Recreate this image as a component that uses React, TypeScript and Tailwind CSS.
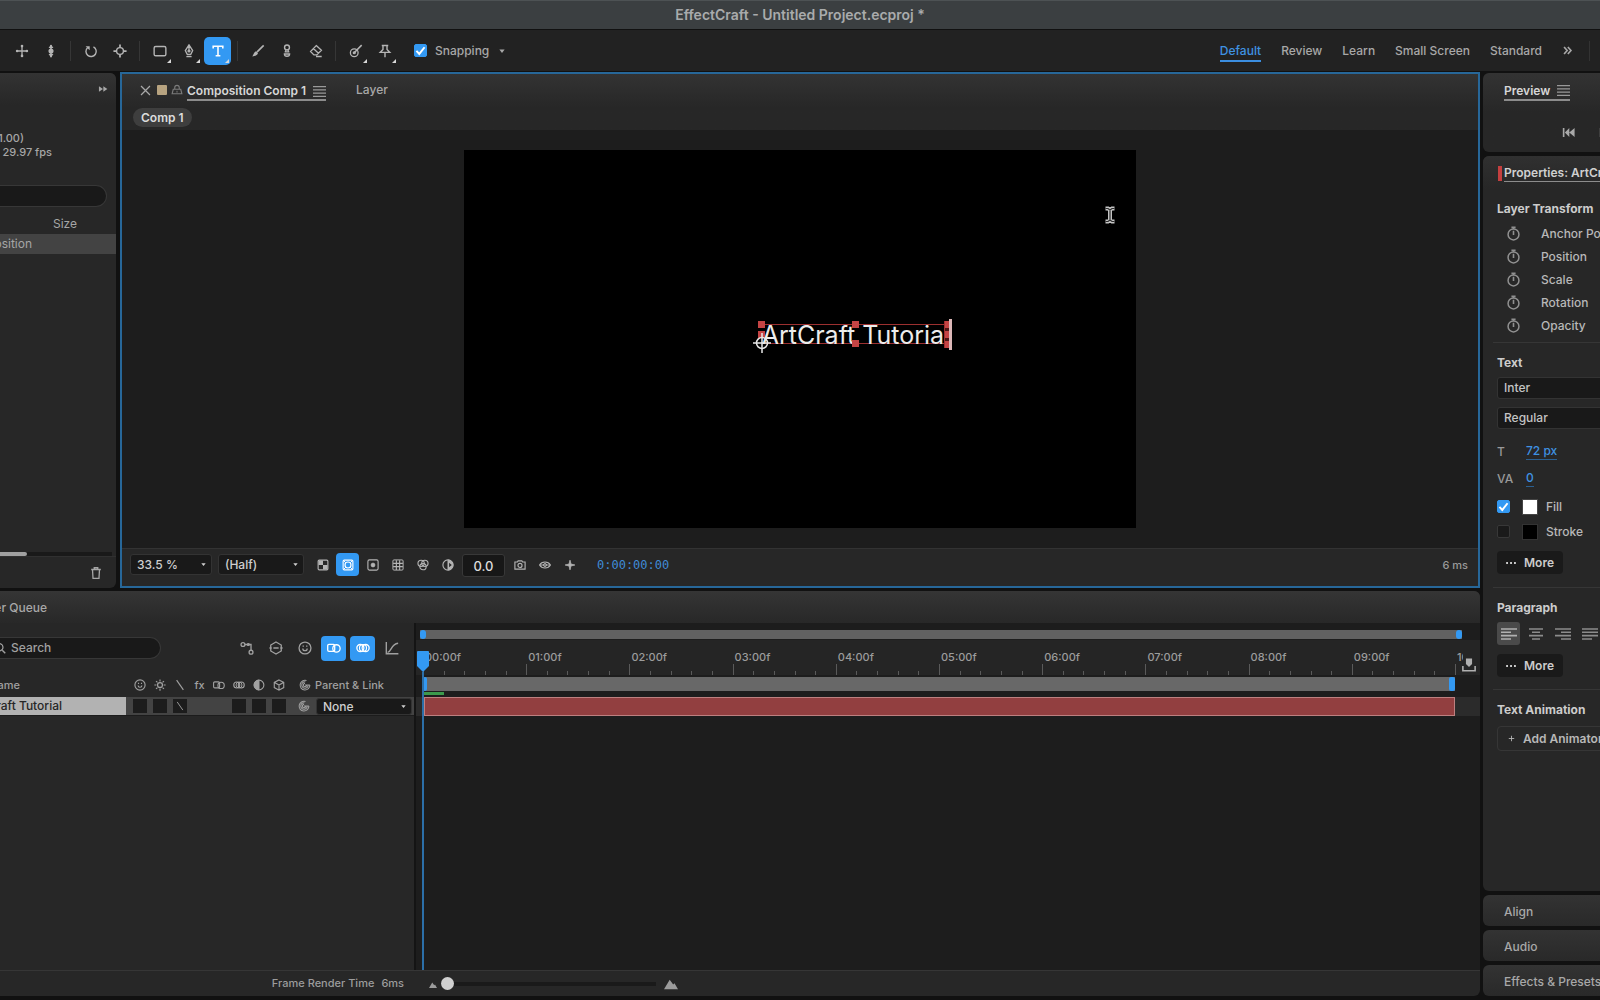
import React from "react";

type IconProps = { name: IconName; size?: string; className?: string };

const shapes = {
  move: (
    <>
      <path d="M8 3v10M3 8h10" strokeWidth="1.500" />
      <circle cx="8" cy="2.400" r="1.500" fill="currentColor" stroke="none" />
      <circle cx="8" cy="13.600" r="1.500" fill="currentColor" stroke="none" />
      <circle cx="2.400" cy="8" r="1.500" fill="currentColor" stroke="none" />
      <circle cx="13.600" cy="8" r="1.500" fill="currentColor" stroke="none" />
    </>
  ),
  dolly: (
    <>
      <path d="M8 1v14" strokeWidth="1.800" />
      <path d="M8 .5 5.200 4.500h5.600zM8 15.500l-2.800-4h5.600z" fill="currentColor" stroke="none" />
      <circle cx="8" cy="8" r="2.900" fill="currentColor" stroke="none" />
    </>
  ),
  rotate: (
    <>
      <path d="M10.800 3.200a5.900 5.900 0 1 1-6.800 1" strokeWidth="1.600" />
      <path d="M1.800 2.500h4.700v4.700z" fill="currentColor" stroke="none" />
    </>
  ),
  anchor: (
    <>
      <circle cx="8" cy="8" r="3.900" strokeWidth="1.600" />
      <path d="M8 .5v3.600M8 11.900v3.600M.5 8h3.600M11.900 8h3.600" strokeWidth="2" />
    </>
  ),
  rect: <rect x="1.300" y="2.800" width="13.400" height="10.600" rx="1.800" strokeWidth="1.600" />,
  pen: (
    <>
      <path d="M8 1 3.800 7.600 6.100 12h3.800l2.300-4.400zM8 2v5M5 14.500h6" strokeWidth="1.500" />
      <circle cx="8" cy="8" r="1.200" fill="currentColor" />
    </>
  ),
  type: <path d="M2.500 5V2.500h11V5M8 2.500v11M5.300 13.500h5.400" strokeWidth="1.800" />,
  brush: (
    <>
      <path d="M14.500 1.500 7 9" strokeWidth="1.900" />
      <path d="M6 8.300 8 10.300c-.6 2.400-3 3.500-6.500 3.900C3.200 12 3.600 9 6 8.300z" fill="currentColor" stroke="none" />
    </>
  ),
  stamp: (
    <>
      <circle cx="8" cy="3.900" r="2.800" strokeWidth="1.600" />
      <path d="M6.900 6.500 6.300 9M9.100 6.500 9.700 9M5.300 9h5.400M5 11.400a3 2.600 0 1 0 6 0z" strokeWidth="1.500" />
    </>
  ),
  eraser: <path d="M8.300 1.800 14.200 7.200 8.900 12.500H5.600L1.800 8.600zM5 5.200l5.800 5.300M8 14.300h6.500" strokeWidth="1.500" />,
  roto: (
    <>
      <circle cx="6" cy="10" r="4.400" strokeWidth="1.500" />
      <path d="m6 10 3-3.200 5.500-5.500" strokeWidth="1.800" />
      <circle cx="6" cy="10" r="1.200" fill="currentColor" />
    </>
  ),
  pin: <path d="M4.300 1.700h7.400M5.700 2v4.200L2.500 9.600h11l-3.200-3.400V2M8 9.600v5.400" strokeWidth="1.600" />,
  close: <path d="m1.500 1.500 13 13M14.500 1.500l-13 13" strokeWidth="1.800" />,
  lock: (
    <>
      <path d="M5 7V4.800a3 3 0 0 1 6 0V7M3 7h10l1.500 6h-13z" strokeWidth="1.500" />
      <path d="M8 9v2.500" />
    </>
  ),
  menu: <path d="M0 2h16M0 6h16M0 10h16M0 14h16" strokeWidth="1.600" />,
  forward: <path d="M1.500 3.500 8 8l-6.500 4.500zM8.500 3.500 15 8l-6.500 4.500z" fill="currentColor" stroke="none" />,
  chevrons: <path d="m3 3 4.500 5L3 13M8.500 3 13 8l-4.500 5" strokeWidth="2.400" />,
  toStart: (
    <>
      <path d="M2 2.500v11" strokeWidth="2" />
      <path d="M9 2.500v11L3.500 8zM15.500 2.500v11L9 8z" fill="currentColor" stroke="none" />
    </>
  ),
  toPrev: <path d="M2 2.500v11M14 2.500 5 8l9 5.500z" strokeWidth="2" fill="currentColor" />,
  stopwatch: (
    <>
      <circle cx="8" cy="9" r="5.800" strokeWidth="1.600" />
      <path d="M8 9.500V5M5.800 1.500h4.400M8 1.700v1.500" strokeWidth="1.700" />
    </>
  ),
  trash: <path d="M2.500 4h11M6 4V2h4v2M4 4l.6 10.200h6.800L12 4" strokeWidth="1.500" />,
  checker: (
    <>
      <rect x="1.500" y="1.500" width="13" height="13" rx="1.500" strokeWidth="1.500" />
      <path d="M2 2h6v6H2zM8 8h6v6H8z" fill="currentColor" stroke="none" />
    </>
  ),
  mask: (
    <>
      <rect x="1.500" y="1.500" width="13" height="13" rx="1.500" strokeWidth="1.500" />
      <circle cx="8" cy="8" r="4" strokeWidth="1.600" />
      <path d="m2 2 3 3M14 2l-3 3M2 14l3-3M14 14l-3-3" />
    </>
  ),
  region: (
    <>
      <rect x="1.200" y="1.200" width="13.600" height="13.600" rx="2" strokeWidth="1.500" />
      <circle cx="8" cy="8" r="2.500" fill="currentColor" />
    </>
  ),
  grid: (
    <>
      <rect x="1.200" y="1.200" width="13.600" height="13.600" rx="1.500" />
      <path d="M5.800 1.500v13M10.200 1.500v13M1.500 5.800h13M1.500 10.200h13" strokeWidth="1.500" />
    </>
  ),
  channels: (
    <>
      <circle cx="5.500" cy="5.800" r="4.200" strokeWidth="1.500" />
      <circle cx="10.500" cy="5.800" r="4.200" strokeWidth="1.500" />
      <circle cx="8" cy="10.200" r="4.200" strokeWidth="1.500" />
    </>
  ),
  exposure: (
    <>
      <circle cx="8" cy="8" r="6.800" strokeWidth="1.500" />
      <path d="M8 1.500a6.500 6.500 0 0 1 0 13z" fill="currentColor" />
      <path d="M9.500 5 13 8l-3.500 3z" fill="#262626" stroke="none" />
    </>
  ),
  camera: (
    <>
      <path d="M1.200 4h3.300l1-1.500h5l1 1.500h3.300v9.500H1.200z" strokeWidth="1.500" />
      <circle cx="8" cy="8.600" r="2.700" strokeWidth="1.500" />
    </>
  ),
  eye: (
    <>
      <path d="M.8 8c3-5.300 11.400-5.300 14.400 0-3 5.300-11.400 5.300-14.400 0z" strokeWidth="1.500" />
      <circle cx="8" cy="8" r="2" />
      <path d="M1 8h14" />
    </>
  ),
  plus: <path d="M8 1.800v12.400M1.800 8h12.400" strokeWidth="2" />,
  sparkle: <path d="M8 1.500 9.300 6.700 14.500 8 9.300 9.300 8 14.500 6.700 9.300 1.500 8l5.200-1.300z" fill="currentColor" strokeWidth="1" />,
  search: (
    <>
      <circle cx="7" cy="7" r="5" strokeWidth="1.600" />
      <path d="m11 11 4 4" strokeWidth="1.800" />
    </>
  ),
  flow: (
    <>
      <circle cx="3.400" cy="4" r="2.200" strokeWidth="1.500" />
      <circle cx="12.600" cy="12.800" r="2.200" strokeWidth="1.500" />
      <path d="M5.500 4h7.100v6.600" strokeWidth="1.500" />
      <circle cx="9.500" cy="4" r="1.200" fill="currentColor" />
    </>
  ),
  hex: (
    <>
      <path d="m8 1.200 6 3.400v6.800l-6 3.400-6-3.400V4.600z" strokeWidth="1.500" />
      <path d="M.5 8H3M5 8h6M13 8h2.500" strokeWidth="1.800" />
    </>
  ),
  face: (
    <>
      <circle cx="8" cy="8" r="6.800" strokeWidth="1.500" />
      <path d="M5.500 8.500c0 3.400 5 3.400 5 0M6 5v1.500M10 5v1.500" strokeWidth="1.500" />
    </>
  ),
  blend: (
    <>
      <rect x=".8" y="3.800" width="8" height="8" rx="1.500" strokeWidth="1.500" />
      <circle cx="10.800" cy="8.500" r="4.200" strokeWidth="1.500" />
    </>
  ),
  blur: (
    <>
      <circle cx="5" cy="8" r="4" strokeWidth="1.500" />
      <circle cx="8" cy="8" r="4" strokeWidth="1.300" />
      <circle cx="11" cy="8" r="4" strokeWidth="1.500" />
    </>
  ),
  graph: <path d="M1.500 1v13.500h13.800M3 13c5-1 3.500-9.500 12-10.500" strokeWidth="1.600" />,
  sun: (
    <>
      <circle cx="8" cy="8" r="3.300" strokeWidth="1.700" />
      <path
        d="M8 .5v2.700M8 12.800v2.700M.5 8h2.700M12.800 8h2.700M2.700 2.700l1.900 1.900M11.400 11.400l1.900 1.900M13.300 2.700l-1.900 1.900M4.600 11.400l-1.900 1.900"
        strokeWidth="1.500"
      />
    </>
  ),
  slash: <path d="m3.500 1.500 9 13" strokeWidth="1.500" />,
  half: (
    <>
      <circle cx="8" cy="8" r="6.500" strokeWidth="1.500" />
      <path d="M8 1.500a6.500 6.500 0 0 0 0 13z" fill="currentColor" />
    </>
  ),
  cube: <path d="m8 1.300 6.300 3.200v6.900L8 14.900l-6.300-3.500V4.500zM2 4.700l6 3.300 6-3.300M8 8v6.500" strokeWidth="1.500" />,
  spiral: (
    <path
      d="M14.500 8A6.500 6.500 0 1 1 10 2M12.300 8A4.300 4.300 0 1 1 8.500 3.700M10.200 8A2.200 2.200 0 1 1 8 5.800M14.500 8H8"
      strokeWidth="1.400"
    />
  ),
  marker: (
    <>
      <path d="M4.500.5h7v6.300L8 10.300 4.500 6.800z" fill="currentColor" stroke="none" />
      <path d="M1 9v5.500h14V9" strokeWidth="1.800" />
    </>
  ),
  mountain: <path d="M0 14 6.500 3l4 5.500L12 7l4 7z" fill="currentColor" stroke="none" />,
  alignLeft: <path d="M0 3h16M0 6.300h10M0 9.600h16M0 13h10" strokeWidth="1.600" />,
  alignCenter: <path d="M1 3h14M4 6.300h8M1 9.600h14M4 13h8" strokeWidth="1.600" />,
  alignRight: <path d="M0 3h16M6 6.300h10M0 9.600h16M6 13h10" strokeWidth="1.600" />,
  justify: <path d="M0 3h16M0 6.300h16M0 9.600h16M0 13h10" strokeWidth="1.600" />,
  dots: <path d="M1.500 8h2.500M6.800 8h2.500M12 8h2.500" strokeWidth="2.400" />,
  caret: <path d="M1 4h14l-7 9z" fill="currentColor" stroke="none" />,
  corner: <path d="M16 0v16H0z" fill="currentColor" stroke="none" />,
  check: <path d="m3 8.500 3.500 3.700L13 4" strokeWidth="2.400" />,
  ibeam: (
    <>
      <path d="M3.500 1.500H6L8 3l2-1.500h2.500M3.500 14.500H6L8 13l2 1.500h2.500M8 3v10" stroke="#c4c4c4" strokeWidth="4" />
      <path d="M3.500 1.500H6L8 3l2-1.500h2.500M3.500 14.500H6L8 13l2 1.500h2.500M8 3v10" stroke="#2a2a2a" strokeWidth="1.200" />
    </>
  ),
};
type IconName = keyof typeof shapes;

function Icon({ name, size = "size-3.5", className = "" }: IconProps) {
  return (
    <svg
      viewBox="0 0 16 16"
      aria-hidden="true"
      className={`shrink-0 ${size} ${className}`}
      fill="none"
      stroke="currentColor"
      strokeWidth="1.300"
    >
      {shapes[name]}
    </svg>
  );
}

function Tool({ icon, label, menu, active }: { icon: IconName; label: string; menu?: boolean; active?: boolean }) {
  return (
    <button
      aria-label={label}
      aria-pressed={active}
      className={`relative flex h-7 w-[27px] shrink-0 items-center justify-center rounded-[5px] ${
        active ? "bg-[#3399f3] text-white" : "text-[#b4b4b4]"
      }`}
    >
      <Icon name={icon} />
      {menu && <Icon name="corner" size="size-1" className="absolute right-0.5 bottom-0.5 text-[#d8d8d8]" />}
    </button>
  );
}

const ToolRule = () => <div className="mx-1 h-5 w-px shrink-0 bg-[#363636]" />;

function CheckBox({ id, defaultChecked, label }: { id: string; defaultChecked?: boolean; label: string }) {
  return (
    <span className="relative flex size-[13px] shrink-0">
      <input
        id={id}
        type="checkbox"
        defaultChecked={defaultChecked}
        aria-label={label}
        className="peer size-[13px] appearance-none rounded-[2px] border border-[#383838] bg-[#1a1a1a] checked:border-[#3399f3] checked:bg-[#3399f3]"
      />
      <Icon name="check" size="size-[13px]" className="pointer-events-none absolute hidden text-white peer-checked:block" />
    </span>
  );
}

function Picker({ label, options, className }: { label: string; options: string[]; className: string }) {
  return (
    <span className={`relative flex shrink-0 items-center text-[#cfcfcf] ${className}`}>
      <select
        aria-label={label}
        className="h-full w-full appearance-none rounded-[3px] border border-[#333] bg-[#191919] pl-1.5 text-xs font-medium"
      >
        {options.map((o) => (
          <option key={o}>{o}</option>
        ))}
      </select>
      <Icon name="caret" size="size-[5px]" className="pointer-events-none absolute right-1.5" />
    </span>
  );
}

const workspaces = ["Default", "Review", "Learn", "Small Screen", "Standard"];

function Toolbar() {
  return (
    <div className="flex h-[41px] shrink-0 items-center bg-[#222]">
      <div className="flex items-center gap-0.5 pl-2">
        <Tool icon="move" label="Pan camera" />
        <Tool icon="dolly" label="Dolly camera" />
        <ToolRule />
        <Tool icon="rotate" label="Rotation tool" />
        <Tool icon="anchor" label="Anchor point tool" />
        <ToolRule />
        <Tool icon="rect" label="Shape tool" menu />
        <Tool icon="pen" label="Pen tool" menu />
        <Tool icon="type" label="Type tool" menu active />
        <ToolRule />
        <Tool icon="brush" label="Brush tool" />
        <Tool icon="stamp" label="Clone stamp tool" />
        <Tool icon="eraser" label="Eraser tool" />
        <ToolRule />
        <Tool icon="roto" label="Roto brush tool" menu />
        <Tool icon="pin" label="Puppet pin tool" menu />
      </div>
      <div className="ml-4 flex items-center text-xs font-medium text-[#a8a8a8]">
        <CheckBox id="snapping" label="Snapping" defaultChecked />
        <label htmlFor="snapping" className="pl-2">
          Snapping
        </label>
        <button aria-label="Snapping options" className="ml-2 p-0.5">
          <Icon name="caret" size="size-1.5" />
        </button>
      </div>
      <nav className="ml-auto flex items-center gap-5 pr-2.5 text-xs font-medium text-[#a8a8a8]">
        {workspaces.map((w, i) => (
          <button
            key={w}
            className={`h-[22px] border-b-2 leading-[22px] ${
              i === 0 ? "border-b-[#3b8ee0] text-[#3f92e2]" : "border-b-transparent"
            }`}
          >
            {w}
          </button>
        ))}
        <div className="flex items-center gap-4">
          <button aria-label="More workspaces">
            <Icon name="chevrons" size="size-[11px]" />
          </button>
          <div className="h-5 w-px bg-[#333]" />
        </div>
      </nav>
    </div>
  );
}

function ProjectPanel() {
  return (
    <section className="mt-px flex w-[116px] shrink-0 flex-col overflow-hidden rounded-r-md bg-[#272727] text-xs text-[#a6a6a6]">
      <div className="flex h-8 shrink-0 items-center justify-end bg-linear-to-b from-[#333] to-[#272727] pr-2">
        <button aria-label="More panels">
          <Icon name="forward" size="size-2.5" />
        </button>
      </div>
      <div className="mt-[26px] text-[11px] leading-[14px] font-medium whitespace-nowrap">
        <p className="flex w-6 justify-end">(1.00)</p>
        <p className="flex w-[52px] justify-end">29.97 fps</p>
      </div>
      <input
        aria-label="Search project"
        className="mt-[26px] mr-[9px] h-[22px] shrink-0 rounded-r-full border border-l-0 border-[#373737] bg-[#191919]"
      />
      <table className="mt-[7px] w-full table-fixed text-left">
        <thead>
          <tr className="h-5">
            <th className="w-8" />
            <th className="pl-[21px] font-normal">Size</th>
          </tr>
        </thead>
        <tbody>
          <tr className="h-5 bg-[#434343]">
            <td>
              <div className="flex justify-end">Composition</div>
            </td>
            <td />
          </tr>
        </tbody>
      </table>
      <div className="mt-auto mr-1 h-1 shrink-0 bg-[#191919]">
        <div className="h-1 w-[27px] rounded-r-sm bg-[#a0a0a0]" />
      </div>
      <div className="flex h-8 shrink-0 items-center justify-end border-t border-[#303030] pr-[13px]">
        <button aria-label="Delete">
          <Icon name="trash" />
        </button>
      </div>
    </section>
  );
}

const handle = "absolute size-[7px] bg-[#c44444]";

function Viewer() {
  return (
    <div className="flex min-h-0 flex-1 justify-center overflow-hidden bg-[#1d1d1d] py-5">
      <div className="relative aspect-video h-full bg-black">
        <div className="absolute top-[46%] left-[44.3%] h-5 w-[188px] border-y border-[#9c3030]">
          <span className="absolute -top-0.5 left-0 text-[25px] leading-6 font-normal whitespace-nowrap text-[#ececec]">
            ArtCraft Tutorial
          </span>
          <span className={`${handle} -top-1 -left-1`} />
          <span className={`${handle} top-1.5 -left-1`} />
          <span className={`${handle} -top-1 left-[90px]`} />
          <span className={`${handle} -bottom-1 left-[90px]`} />
          <span className="absolute -top-1 right-0 flex h-[27px] w-1.5 flex-col justify-between border-x border-[#9c3030] bg-[#4a1515] *:h-[7px] *:bg-[#c44444]">
            <i />
            <i />
            <i />
          </span>
          <span className="absolute -top-1.5 -right-0.5 h-[31px] w-[3px] bg-[#dcb8b8]" />
          <svg viewBox="0 0 18 20" className="absolute -bottom-2.5 -left-[9px] h-5 w-[18px]" fill="none" stroke="#e6e6e6" strokeWidth="1.500">
            <circle cx="9" cy="10" r="5.500" />
            <path d="M9 0v20M0 10h18" />
          </svg>
        </div>
        <Icon name="ibeam" size="h-5 w-4" className="absolute top-[14.5%] right-[18px]" />
      </div>
    </div>
  );
}

function ViewButton({ icon, label, active }: { icon: IconName; label: string; active?: boolean }) {
  return (
    <button
      aria-label={label}
      className={`flex h-[23px] w-[23px] items-center justify-center rounded-[4px] ${active ? "bg-[#3399f3] text-white" : ""}`}
    >
      <Icon name={icon} size="size-3" />
    </button>
  );
}

function CompositionPanel() {
  return (
    <section className="flex min-w-0 flex-1 flex-col border-2 border-[#276799] bg-[#272727] text-xs font-medium text-[#a8a8a8]">
      <header className="h-14 shrink-0 bg-linear-to-b from-[#333] to-[#272727] to-60%">
        <div className="flex h-8 items-center pl-[18px]">
          <button aria-label="Close tab">
            <Icon name="close" size="size-[11px]" />
          </button>
          <span className="ml-1.5 size-2.5 rounded-[1px] bg-[#b7a380]" />
          <Icon name="lock" size="size-3" className="mx-1 text-[#7c7c7c]" />
          <button className="mt-1 flex items-center gap-[7px] border-b-2 border-[#8c8c8c] leading-4 font-semibold text-[#d6d6d6]">
            Composition Comp 1
            <Icon name="menu" size="size-[13px]" className="text-[#999]" />
          </button>
          <button className="ml-[30px]">Layer</button>
        </div>
        <button className="ml-[11px] mt-0.5 flex h-[19px] items-center rounded-full bg-[#3e3e3e] px-2 font-semibold text-[#dcdcdc]">
          Comp 1
        </button>
      </header>
      <Viewer />
      <footer className="flex h-[38px] shrink-0 items-start border-t border-[#333] pt-1 text-[#b4b4b4]">
        <Picker label="Magnification" options={["33.5 %"]} className="ml-2 mt-px h-[21px] w-[82px]" />
        <Picker label="Resolution" options={["(Half)"]} className="ml-1.5 mt-px h-[21px] w-[86px]" />
        <div className="ml-[7px] flex gap-0.5">
          <ViewButton icon="checker" label="Transparency grid" />
          <ViewButton icon="mask" label="Mask visibility" active />
          <ViewButton icon="region" label="Region of interest" />
          <ViewButton icon="grid" label="Guides" />
          <ViewButton icon="channels" label="Channels" />
          <ViewButton icon="exposure" label="Exposure" />
        </div>
        <input
          aria-label="Exposure value"
          defaultValue="0.0"
          className="mx-[3px] mt-px h-[23px] w-[43px] rounded-[3px] border border-[#383838] bg-[#171717] text-center text-[13px] text-[#dcdcdc]"
        />
        <div className="flex gap-0.5">
          <ViewButton icon="camera" label="Take snapshot" />
          <ViewButton icon="eye" label="Show snapshot" />
          <ViewButton icon="sparkle" label="Add" />
        </div>
        <button className="ml-4 h-[23px] font-['DejaVu_Sans_Mono',monospace] text-xs text-[#3f8bd6]">0:00:00:00</button>
        <span className="mr-2.5 ml-auto text-[11px] leading-6 text-[#9a9a9a]">6 ms</span>
      </footer>
    </section>
  );
}

const switches: IconName[] = ["face", "sun", "slash", "slash", "blend", "blur", "half", "cube"];
const seconds = Array.from({ length: 10 }, (_, i) => `0${i}:00f`);

function ModeButton({ icon, label, active }: { icon: IconName; label: string; active?: boolean }) {
  return (
    <button
      aria-label={label}
      className={`flex size-[25px] items-center justify-center rounded-[4px] ${active ? "bg-[#3399f3] text-white" : "text-[#a0a0a0]"}`}
    >
      <Icon name={icon} />
    </button>
  );
}

function LayerList() {
  return (
    <div className="flex w-[416px] shrink-0 flex-col border-r-2 border-[#141414] text-[11px] font-medium text-[#a0a0a0]">
      <div className="flex h-[50px] shrink-0 items-center">
        <label className="flex h-[22px] w-[161px] items-center rounded-r-full border border-l-0 border-[#373737] bg-[#191919] text-xs">
          <span className="flex w-[6px] shrink-0 justify-end">
            <Icon name="search" size="size-3" />
          </span>
          <input
            aria-label="Search layers"
            placeholder="Search"
            className="ml-[5px] w-full bg-transparent placeholder:text-[#a0a0a0]"
          />
        </label>
        <div className="mr-2.5 ml-auto flex gap-1">
          <ModeButton icon="flow" label="Composition flowchart" />
          <ModeButton icon="hex" label="Draft 3D" />
          <ModeButton icon="face" label="Hide shy layers" />
          <ModeButton icon="blend" label="Frame blending" active />
          <ModeButton icon="blur" label="Motion blur" active />
          <ModeButton icon="graph" label="Graph editor" />
        </div>
      </div>
      <div className="flex h-6 shrink-0 items-center">
        <span className="flex w-5 justify-end">Name</span>
        <div className="ml-[113px] flex w-[153px] items-center justify-between">
          {switches.map((s, i) =>
            i === 3 ? (
              <span key={i} className="flex w-3.5 justify-center">
                fx
              </span>
            ) : (
              <Icon key={i} name={s} size="size-3.5" className="p-px" />
            ),
          )}
        </div>
        <Icon name="spiral" size="size-3" className="ml-[13px]" />
        <span className="ml-1">Parent &amp; Link</span>
      </div>
      <div className="flex h-[19px] shrink-0 items-center border-b border-[#1c1c1c] bg-[#434343]">
        <div className="flex h-full w-[126px] items-center bg-[#b2b2b2] text-xs text-[#262626]">
          <span className="flex w-[62px] justify-end whitespace-nowrap">ArtCraft Tutorial</span>
        </div>
        <div className="ml-[7px] flex w-[153px] items-center justify-between">
          {switches.map((s, i) =>
            i === 3 || i === 4 ? (
              <span key={i} className="size-3.5" />
            ) : (
              <button key={i} aria-label={`Layer switch ${s}`} className="flex size-3.5 items-center justify-center bg-[#1c1c1c]">
                {s === "slash" && <Icon name="slash" size="size-2.5" />}
              </button>
            ),
          )}
        </div>
        <Icon name="spiral" size="size-3" className="ml-3" />
        <Picker label="Parent" options={["None"]} className="ml-1.5 h-[17px] w-[96px]" />
      </div>
    </div>
  );
}

function Tracks() {
  return (
    <div className="relative flex min-w-0 flex-1 flex-col overflow-hidden bg-[#1d1d1d]">
      <div className="flex h-[17px] shrink-0 items-end pr-[18px] pb-px pl-1">
        <div className="flex h-[9px] w-full justify-between bg-[#616161]">
          <span className="w-1.5 rounded-[3px] bg-[#3399f3]" />
          <span className="w-1.5 rounded-[3px] bg-[#3399f3]" />
        </div>
      </div>
      <div className="flex h-[35px] shrink-0 bg-[#252525] pt-2 pl-[7px] text-[11px] font-medium text-[#9c9c9c]">
        <div className="grid flex-1 grid-cols-10">
          {seconds.map((s) => (
            <div key={s} className="flex min-w-0 flex-col">
              <span className="h-4 pl-0.5 leading-[18px]">{s}</span>
              <div className="flex h-[11px] items-end *:h-1 *:flex-1 *:border-l *:border-[#5a5a5a] *:first:h-[11px]">
                <i />
                <i />
                <i />
                <i />
                <i />
              </div>
            </div>
          ))}
        </div>
        <div className="flex w-[25px] flex-col">
          <span className="h-4 w-2 overflow-hidden pl-0.5 leading-[18px]">10:00f</span>
          <div className="h-[11px] border-l border-[#5a5a5a]" />
        </div>
        <button aria-label="Add marker" className="absolute top-[35px] right-1 text-[#b0b0b0]">
          <Icon name="marker" />
        </button>
      </div>
      <div className="shrink-0 pt-0.5 pr-[25px] pl-[7px]">
        <div className="flex h-[14px] justify-between bg-[#686868]">
          <span className="w-1 rounded-[2px] bg-[#3399f3]" />
          <span className="w-1.5 rounded-[2px] bg-[#3399f3]" />
        </div>
        <div className="mt-px mb-0.5 h-[3px] w-[21px] bg-[#3c9a4c]" />
      </div>
      <div className="h-[19px] shrink-0 bg-[#2b2b2b] pr-[25px] pl-2">
        <div className="h-full border border-[#bd8080] bg-[#923f40]" />
      </div>
      <div className="pointer-events-none absolute top-7 bottom-0 left-px flex w-3 flex-col items-center">
        <svg viewBox="0 0 12 21" className="h-[21px] w-3 shrink-0" fill="#3399f3">
          <path d="M0 1a1 1 0 0 1 1-1h10a1 1 0 0 1 1 1v14l-6 6-6-6z" />
        </svg>
        <span className="w-0.5 flex-1 bg-[#2c6fa8]" />
      </div>
    </div>
  );
}

function TimelinePanel() {
  return (
    <section className="flex min-h-0 flex-[405] flex-col overflow-hidden rounded-r-md bg-[#272727]">
      <header className="flex h-8 shrink-0 items-center bg-linear-to-b from-[#353535] to-[#282828] pt-0.5 text-xs font-medium text-[#a8a8a8]">
        <button className="flex w-[47px] justify-end whitespace-nowrap">Render Queue</button>
      </header>
      <div className="flex min-h-0 flex-1">
        <LayerList />
        <Tracks />
      </div>
      <footer className="flex h-[26px] shrink-0 items-center border-t border-[#363636] text-[11px] font-medium text-[#9c9c9c]">
        <div className="flex w-[404px] justify-end gap-[7px]">
          <span>Frame Render Time</span>
          <span>6ms</span>
        </div>
        <Icon name="mountain" size="size-2" className="mt-0.5 ml-[25px]" />
        <input
          type="range"
          aria-label="Timeline zoom"
          defaultValue={0}
          className="ml-1 h-[13px] w-[215px] appearance-none bg-transparent [&::-webkit-slider-runnable-track]:h-1 [&::-webkit-slider-runnable-track]:bg-[#1a1a1a] [&::-webkit-slider-thumb]:-mt-[5px] [&::-webkit-slider-thumb]:size-[13px] [&::-webkit-slider-thumb]:appearance-none [&::-webkit-slider-thumb]:rounded-full [&::-webkit-slider-thumb]:bg-[#d0d0d0]"
        />
        <Icon name="mountain" size="size-3.5" className="ml-2" />
      </footer>
    </section>
  );
}

function Section({ title, children }: { title: string; children: React.ReactNode }) {
  return (
    <div className="ml-2.5 border-t border-[#363636] pl-1">
      <h3 className="h-[34px] pt-2.5 leading-5 font-bold text-[#cccccc]">{title}</h3>
      {children}
    </div>
  );
}

const MoreButton = () => (
  <button className="flex h-[23px] w-[66px] items-center gap-[7px] rounded-[4px] bg-[#1a1a1a] pl-2 font-semibold text-[#cccccc]">
    <Icon name="dots" size="size-3" />
    More
  </button>
);

const transforms = ["Anchor Point", "Position", "Scale", "Rotation", "Opacity"];
const paragraphAligns: IconName[] = ["alignLeft", "alignCenter", "alignRight", "justify"];
const field = "block h-[22px] w-[190px] rounded-[3px] border border-[#333] bg-[#191919] pl-1.5 text-[#c4c4c4]";

function PropertiesPanel() {
  return (
    <section className="flex-1 overflow-hidden rounded-l-md bg-[#272727]">
      <header className="flex h-[33px] items-center bg-linear-to-b from-[#303030] to-[#272727] pt-0.5 pl-[15px]">
        <span className="mr-0.5 h-[15px] w-1 shrink-0 bg-[#c43f3f]" />
        <button className="border-b border-[#8c8c8c] leading-4 font-semibold text-[#d0d0d0]">Properties: ArtCraft Tutorial</button>
      </header>
      <div className="mb-[5px] pl-3.5">
        <h3 className="h-[33px] pt-2.5 leading-5 font-bold text-[#cccccc]">Layer Transform</h3>
        {transforms.map((t) => (
          <div key={t} className="flex h-[23px] items-center gap-5 pl-[9px]">
            <button aria-label={`Animate ${t}`} className="text-[#909090]">
              <Icon name="stopwatch" size="size-[15px]" />
            </button>
            {t}
          </div>
        ))}
      </div>
      <Section title="Text">
        <select aria-label="Font family" className={`${field} mb-2 appearance-none`}>
          <option>Inter</option>
        </select>
        <select aria-label="Font style" className={`${field} mb-[9px] appearance-none`}>
          <option>Regular</option>
        </select>
        <div className="flex h-[27px] items-center">
          <span className="w-[29px] text-[#999]">T</span>
          <button className="border-b border-[#2b5f8f] leading-4 text-[#3f92e2]">72 px</button>
        </div>
        <div className="flex h-[27px] items-center">
          <span className="w-[29px] text-[#999]">VA</span>
          <button className="border-b border-[#2b5f8f] leading-4 text-[#3f92e2]">0</button>
        </div>
        <div className="mt-0.5 flex h-[25px] items-center">
          <CheckBox id="fill" label="Fill" defaultChecked />
          <button aria-label="Fill color" className="ml-3 size-4 border border-[#444] bg-white" />
          <label htmlFor="fill" className="ml-2">
            Fill
          </label>
        </div>
        <div className="mb-[7px] flex h-[25px] items-center">
          <CheckBox id="stroke" label="Stroke" />
          <button aria-label="Stroke color" className="ml-3 size-4 border border-[#333] bg-black" />
          <label htmlFor="stroke" className="ml-2">
            Stroke
          </label>
        </div>
        <MoreButton />
      </Section>
      <div className="h-[13px]" />
      <Section title="Paragraph">
        <div className="mb-[9px] flex gap-1">
          {paragraphAligns.map((a, i) => (
            <button
              key={a}
              aria-label={a}
              className={`flex size-[23px] shrink-0 items-center justify-center rounded-[3px] ${i === 0 ? "bg-[#4a4a4a] text-[#b0b0b0]" : "text-[#8c8c8c]"}`}
            >
              <Icon name={a} size="size-4" />
            </button>
          ))}
        </div>
        <MoreButton />
      </Section>
      <div className="h-3" />
      <Section title="Text Animation">
        <button className="mt-0.5 flex h-[25px] w-[190px] items-center gap-2 rounded-[4px] border border-[#363636] pl-2.5 font-semibold">
          <Icon name="plus" size="size-[7px]" />
          Add Animator
        </button>
      </Section>
    </section>
  );
}

function SidePanels() {
  return (
    <aside className="flex w-[117px] shrink-0 flex-col gap-1 overflow-hidden pt-px text-xs font-medium whitespace-nowrap text-[#b8b8b8]">
      <section className="h-[79px] shrink-0 overflow-hidden rounded-l-md bg-linear-to-b from-[#333] to-[#272727] to-50%">
        <div className="flex h-[33px] items-center pl-[21px]">
          <button className="mt-1 flex items-center gap-[7px] border-b-2 border-[#8c8c8c] leading-4 font-semibold text-[#d6d6d6]">
            Preview
            <Icon name="menu" size="size-[13px]" className="text-[#999]" />
          </button>
        </div>
        <div className="mt-5 flex gap-6 pl-[79px] text-[#a8a8a8]">
          <button aria-label="First frame">
            <Icon name="toStart" size="size-[13px]" />
          </button>
          <button aria-label="Previous frame">
            <Icon name="toPrev" size="size-[13px]" />
          </button>
        </div>
      </section>
      <PropertiesPanel />
      {["Align", "Audio", "Effects & Presets"].map((p) => (
        <button
          key={p}
          className="h-[31px] shrink-0 overflow-hidden rounded-l-md bg-linear-to-b from-[#333] to-[#292929] pt-0.5 pl-[21px] text-left text-[#a8a8a8]"
        >
          {p}
        </button>
      ))}
    </aside>
  );
}

export default function App() {
  return (
    <div className="flex h-screen w-full flex-col overflow-hidden bg-[#111] pb-1 font-['Inter',sans-serif]">
      <header className="flex h-[30px] shrink-0 items-center justify-center border-t border-b border-t-[#4d5254] border-b-[#111] bg-[#3b3f41] text-sm font-semibold text-[#a9abac]">
        <h1>EffectCraft - Untitled Project.ecproj *</h1>
      </header>
      <Toolbar />
      <main className="mt-px flex min-h-0 flex-1 gap-[3px]">
        <div className="flex min-w-0 flex-1 flex-col gap-[3px]">
          <div className="flex min-h-0 flex-[516] gap-1">
            <ProjectPanel />
            <CompositionPanel />
          </div>
          <TimelinePanel />
        </div>
        <SidePanels />
      </main>
    </div>
  );
}
